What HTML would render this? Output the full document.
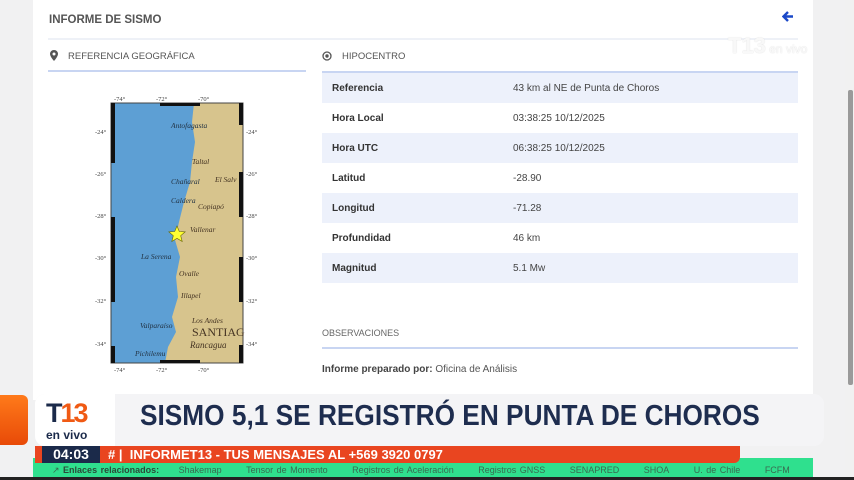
<!DOCTYPE html>
<html><head><meta charset="utf-8"><style>
*{margin:0;padding:0;box-sizing:border-box}
body{width:854px;height:480px;overflow:hidden;background:#f1f1f2;font-family:"Liberation Sans",sans-serif;position:relative;color:#333}
.card{position:absolute;left:33px;top:0;width:780px;height:400px;background:#fff}
.abs{position:absolute}
.t{font-size:10px;color:#444}
.row{position:absolute;left:322px;width:476px;height:30px}
.row span{position:absolute;top:10px;font-size:10px}
.row b{position:absolute;left:10px;top:10px;font-size:10px;color:#333}
.row span{left:191px;color:#444}
.sh{background:#edf1fb}
</style></head><body>
<div class="card"></div>
<div class="abs" style="left:49px;top:14px;font-size:11.5px;font-weight:bold;color:#555">INFORME DE SISMO</div>
<svg class="abs" style="left:782px;top:11px" width="12" height="11" viewBox="0 0 12 11"><path d="M6 1 L1.5 5.5 L6 10 M2 5.5 H11" fill="none" stroke="#1a48c8" stroke-width="2.4"/></svg>
<div class="abs" style="left:48px;top:38px;width:750px;height:2px;background:#eef1f7"></div>
<svg class="abs" style="left:50px;top:50px" width="8" height="11" viewBox="0 0 8 11"><path d="M4 0C1.8 0 0 1.7 0 3.9 0 6.7 4 11 4 11S8 6.7 8 3.9C8 1.7 6.2 0 4 0z" fill="#555"/><circle cx="4" cy="4" r="1.5" fill="#fff"/></svg>
<div class="abs t" style="left:68px;top:51px;font-size:9.5px;color:#555">REFERENCIA GEOGRÁFICA</div>
<div class="abs" style="left:48px;top:70px;width:258px;height:2px;background:#c8d5f2"></div>
<svg class="abs" style="left:322px;top:51px" width="10" height="10"><circle cx="5" cy="5" r="4" fill="none" stroke="#555" stroke-width="1.3"/><circle cx="5" cy="5" r="1.7" fill="#555"/></svg>
<div class="abs t" style="left:342px;top:51px;font-size:9.5px;color:#555">HIPOCENTRO</div>
<div class="abs" style="left:322px;top:71px;width:476px;height:2px;background:#c8d5f2"></div>
<div class="row sh" style="top:73px"><b>Referencia</b><span>43 km al NE de Punta de Choros</span></div>
<div class="row" style="top:103px"><b>Hora Local</b><span>03:38:25 10/12/2025</span></div>
<div class="row sh" style="top:133px"><b>Hora UTC</b><span>06:38:25 10/12/2025</span></div>
<div class="row" style="top:163px"><b>Latitud</b><span>-28.90</span></div>
<div class="row sh" style="top:193px"><b>Longitud</b><span>-71.28</span></div>
<div class="row" style="top:223px"><b>Profundidad</b><span>46 km</span></div>
<div class="row sh" style="top:253px"><b>Magnitud</b><span>5.1 Mw</span></div>
<div class="abs t" style="left:322px;top:328px;font-size:9px;color:#666">OBSERVACIONES</div>
<div class="abs" style="left:322px;top:347px;width:476px;height:2px;background:#c8d5f2"></div>
<div class="abs t" style="left:322px;top:364px;color:#555"><b style="color:#444">Informe preparado por:</b> Oficina de Análisis</div>
<div class="abs" style="left:845px;top:0;width:9px;height:480px;background:#f1f1f1"></div>
<div class="abs" style="left:848px;top:90px;width:5px;height:295px;background:#9a9a9a;border-radius:2px"></div>
<div class="abs" style="left:728px;top:33px;font-size:22px;font-weight:bold;color:rgba(255,255,255,.85);text-shadow:0 0 1px #ccc">T13<span style="font-size:12px;font-weight:normal"> en vivo</span></div>
<svg class="abs" style="left:80px;top:92px" width="200" height="285" viewBox="0 0 200 285" font-family="Liberation Serif" font-style="italic">
<rect x="31" y="11" width="132" height="260" fill="#5d9fd4"/>
<path d="M114 11 L163 11 L163 271 L85 271 L88 255 L96 240 L92 225 L98 205 L96 185 L100 165 L95 148 L99 130 L104 110 L110 90 L112 70 L115 50 L112 30 Z" fill="#d7c48d"/>
<rect x="31" y="11" width="132" height="260" fill="none" stroke="#444" stroke-width="1"/>
<g fill="#111"><rect x="31" y="11" width="4" height="60"/><rect x="31" y="125" width="4" height="85"/><rect x="159" y="11" width="4" height="22"/><rect x="159" y="80" width="4" height="45"/><rect x="159" y="165" width="4" height="45"/><rect x="159" y="253" width="4" height="18"/><rect x="80" y="11" width="40" height="3"/><rect x="80" y="268" width="40" height="3"/><rect x="31" y="254" width="4" height="17"/></g>
<g font-size="6.5" fill="#444" font-style="normal"><text x="34" y="9">-74°</text><text x="76" y="9">-72°</text><text x="118" y="9">-70°</text><text x="34" y="280">-74°</text><text x="76" y="280">-72°</text><text x="118" y="280">-70°</text>
<text x="15" y="42">-24°</text><text x="15" y="84">-26°</text><text x="15" y="126">-28°</text><text x="15" y="168">-30°</text><text x="15" y="211">-32°</text><text x="15" y="254">-34°</text>
<text x="166" y="42">-24°</text><text x="166" y="84">-26°</text><text x="166" y="126">-28°</text><text x="166" y="168">-30°</text><text x="166" y="211">-32°</text><text x="166" y="254">-34°</text></g>
<g font-size="7.5" fill="#234"><text x="91" y="36">Antofagasta</text><text x="91" y="92">Chañaral</text><text x="91" y="111">Caldera</text><text x="61" y="167">La Serena</text><text x="60" y="236">Valparaíso</text><text x="55" y="264">Pichilemu</text></g>
<g font-size="7.5" fill="#432"><text x="112" y="72">Taltal</text><text x="135" y="90">El Salv</text><text x="118" y="117">Copiapó</text><text x="110" y="140">Vallenar</text><text x="99" y="184">Ovalle</text><text x="101" y="206">Illapel</text><text x="112" y="231">Los Andes</text><text x="112" y="244" font-size="12" font-style="normal">SANTIAG</text><text x="110" y="256" font-size="9">Rancagua</text></g>
<path d="M97 134 l2.3 5.5 5.9 .4 -4.5 3.8 1.5 5.8 -5.2-3.1 -5.2 3.1 1.5-5.8 -4.5-3.8 5.9-.4z" fill="#ff3" stroke="#660" stroke-width=".6"/>
</svg>
<div class="abs" style="left:0;top:395px;width:28px;height:50px;background:linear-gradient(#ff7a1a,#e84a08);border-radius:0 6px 6px 0"></div>
<div class="abs" style="left:35px;top:394px;width:789px;height:52px;background:#f4f4f6;border-radius:10px"></div>
<div class="abs" style="left:35px;top:394px;width:80px;height:52px;background:#fff;border-radius:10px 0 0 10px"></div>
<div class="abs" style="left:46px;top:398px;font-size:27px;font-weight:bold;color:#1b2a4a;letter-spacing:-2px">T<span style="color:#f05a14">13</span></div>
<div class="abs" style="left:46px;top:428px;font-size:12px;font-weight:bold;color:#1b2a4a">en vivo</div>
<div class="abs" style="left:140px;top:400px;font-size:29px;font-weight:bold;color:#1e2d4f;transform:scaleX(.905);transform-origin:left;white-space:nowrap">SISMO 5,1 SE REGISTRÓ EN PUNTA DE CHOROS</div>
<div class="abs" style="left:33px;top:458px;width:780px;height:22px;background:#2fe08e"></div>
<div class="abs" style="left:35px;top:446px;width:705px;height:17px;background:#e94520;border-radius:0 0 6px 0"></div>
<div class="abs" style="left:42px;top:446px;width:58px;height:17px;background:#1b2a4a;color:#fff;font-weight:bold;font-size:14px;text-align:center;line-height:17px">04:03</div>
<div class="abs" style="left:108px;top:446px;color:#fff;font-weight:bold;font-size:13px;line-height:17px;white-space:nowrap">#&nbsp;| &nbsp;INFORMET13 - TUS MENSAJES AL +569 3920 0797</div>
<div class="abs" style="left:52px;top:465px;font-size:9px;color:#3a6a50;white-space:nowrap;word-spacing:1px">&#x2197; <b style="color:#2c4a3a">Enlaces relacionados:</b> <span style="display:inline-block;width:16px"></span>Shakemap&nbsp;&nbsp;&nbsp;&nbsp;&nbsp;&nbsp;&nbsp;Tensor de Momento&nbsp;&nbsp;&nbsp;&nbsp;&nbsp;&nbsp;&nbsp;Registros de Aceleración&nbsp;&nbsp;&nbsp;&nbsp;&nbsp;&nbsp;&nbsp;Registros GNSS&nbsp;&nbsp;&nbsp;&nbsp;&nbsp;&nbsp;&nbsp;SENAPRED&nbsp;&nbsp;&nbsp;&nbsp;&nbsp;&nbsp;&nbsp;SHOA&nbsp;&nbsp;&nbsp;&nbsp;&nbsp;&nbsp;&nbsp;U. de Chile&nbsp;&nbsp;&nbsp;&nbsp;&nbsp;&nbsp;&nbsp;FCFM</div>
<div class="abs" style="left:0;top:477px;width:854px;height:3px;background:#222"></div>
</body></html>
